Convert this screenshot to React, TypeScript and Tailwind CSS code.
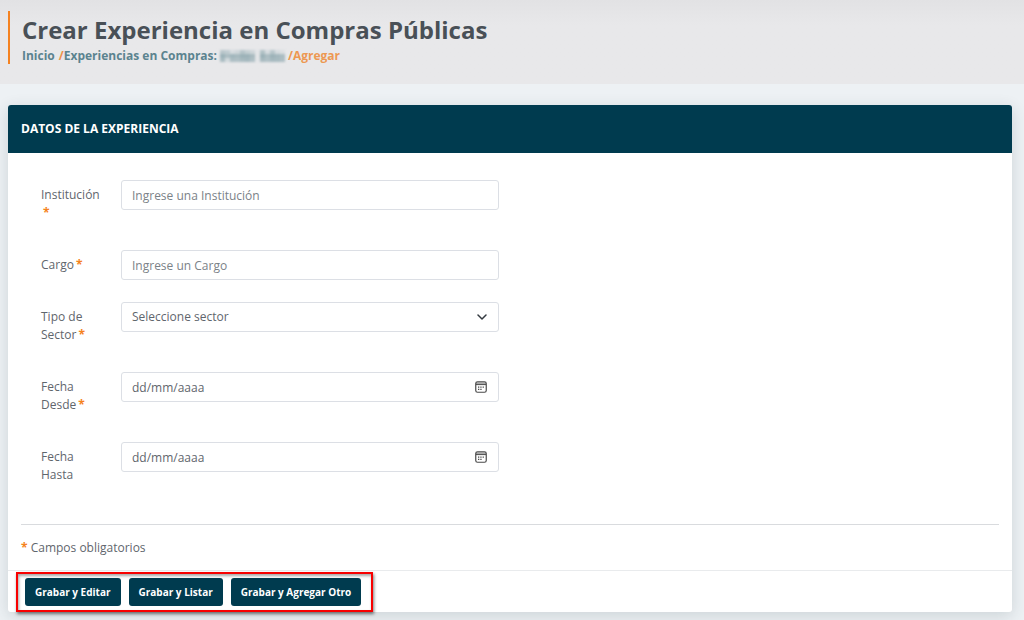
import { useState } from "react";
import type { ReactNode } from "react";

const fieldClass =
  "h-[30px] w-full rounded-[3px] border border-[#dcdfe5] bg-white px-2.5 text-[12px] text-[#5f666d] outline-none placeholder:opacity-100 focus:border-[#00394d]";

function Required() {
  return <span className="ml-[2px] font-bold text-[#f58220]">*</span>;
}

function Row({ id, label, required, children }: { id: string; label: string; required?: boolean; children: ReactNode }) {
  return (
    <div className="mb-[22px] flex items-start">
      <label htmlFor={id} className="w-20 shrink-0 py-[6px] pr-[18px] leading-[18px]">
        {label}
        {required && (
          <>
            <wbr />
            <Required />
          </>
        )}
      </label>
      <div className="relative min-w-0 flex-1">{children}</div>
    </div>
  );
}

function CalendarIcon() {
  return (
    <svg width="12" height="12" viewBox="0 0 12 12" fill="none">
      <path d="M1 1.2h10v2.3H1z" fill="#aaaaaa" />
      <rect x="0.75" y="0.75" width="10.5" height="10.5" rx="1.8" stroke="#4a4a4a" strokeWidth="1.2" />
      <path d="M1 3.6h10" stroke="#4a4a4a" strokeWidth="1" />
      <path d="M3 5.4h1.3v1.3H3zM5.3 5.4h1.3v1.3H5.3zM7.6 5.4h1.3v1.3H7.6zM3 7.7h1.3V9H3zM5.3 7.7h1.3V9H5.3z" fill="#4a4a4a" />
    </svg>
  );
}

function DateField({ id }: { id: string }) {
  const [value, setValue] = useState("");
  return (
    <>
      <input
        id={id}
        type="text"
        inputMode="numeric"
        placeholder="dd/mm/aaaa"
        value={value}
        onChange={(e) => setValue(e.target.value)}
        className={`${fieldClass} pr-9 placeholder:text-[#5f666d]`}
      />
      <button type="button" aria-label="Calendario" className="absolute inset-y-0 right-3 flex items-center">
        <CalendarIcon />
      </button>
    </>
  );
}

/* Mosaic tones that hide the person's name, one row of cells per line. */
const mosaic = [
  ["#b9c7cb", "#c0ccd0", "#d6dcdf", "#ced6d9", "#b6c5c9", "#c4cfd2", "#ced6d9", "#e3e5e7", "#b2c2c6", "#d6dcdf", "#b9c7cb", "#d6dcdf", "#dce0e2"],
  ["#9db3b9", "#adbec3", "#a1b6bc", "#a7babf", "#9cb2b8", "#9db3b9", "#a9bbc0", "#e3e5e7", "#9cb2b8", "#adbec3", "#9db3b9", "#a5b8be", "#abbdc2"],
  ["#abbdc2", "#d1d9dc", "#adbec3", "#b0c0c5", "#a8bbc0", "#a5b8be", "#b0c0c5", "#e3e5e7", "#a9bbc0", "#b0c0c5", "#a6b9bf", "#a8bbc0", "#adbec3"],
];

function HiddenName() {
  return (
    <svg width="65" height="12" viewBox="0 0 65 12" className="mr-[3px] ml-[3px] inline-block shrink-0 blur-[1px]" aria-hidden="true">
      {mosaic.map((row, y) => row.map((c, x) => <rect key={`${x}-${y}`} x={x * 5} y={y * 4} width="5" height="4" fill={c} />))}
    </svg>
  );
}

const actions = ["Grabar y Editar", "Grabar y Listar", "Grabar y Agregar Otro"];

export default function App() {
  return (
    <div className="min-h-screen bg-[#edf1f4] font-['Open_Sans','Noto_Sans',sans-serif] text-[12px] text-[#5f666d]">
      <header className="bg-linear-to-b from-[#e2e2e4] to-[#e8e8ea] to-30% px-2 pt-[11px] pb-5">
        <div className="border-l-2 border-[#f58220] pt-[3px] pl-3">
          <h1 className="text-[24px] leading-[32px] font-bold text-[#495057]">Crear Experiencia en Compras Públicas</h1>
          <nav className="mt-[2px] flex items-center text-[12px] leading-4 font-bold text-[#5b838f]">
            <a href="#inicio">Inicio</a>
            <span className="ml-1 text-[#f0924a]">/</span>
            <a href="#experiencias">Experiencias en Compras:</a>
            <HiddenName />
            <span className="text-[#ed9852]">/Agregar</span>
          </nav>
        </div>
      </header>

      <main className="pt-[21px] pr-3 pb-2 pl-2">
        <form
          onSubmit={(e) => e.preventDefault()}
          className="rounded-[3px] bg-white shadow-[0_4px_16px_rgba(40,60,70,0.16)]"
        >
          <h2 className="rounded-t-[3px] bg-[#003b4f] px-[13px] text-[12px] leading-[48px] font-bold text-white">
            DATOS DE LA EXPERIENCIA
          </h2>

          <div className="px-[13px] pt-[27px]">
            <div className="grid gap-[22px] border-b border-[#d9dbde] px-5 pb-3 md:grid-cols-2">
              <div>
                <Row id="institucion" label="Institución" required>
                  <input
                    id="institucion"
                    type="text"
                    placeholder="Ingrese una Institución"
                    className={`${fieldClass} placeholder:text-[#7b8288]`}
                  />
                </Row>
                <Row id="cargo" label="Cargo" required>
                  <input
                    id="cargo"
                    type="text"
                    placeholder="Ingrese un Cargo"
                    className={`${fieldClass} placeholder:text-[#7b8288]`}
                  />
                </Row>
                <Row id="sector" label="Tipo de Sector" required>
                  <select id="sector" className={`${fieldClass} appearance-none pr-9`}>
                    <option>Seleccione sector</option>
                    <option>Público</option>
                    <option>Privado</option>
                  </select>
                  <svg
                    width="10"
                    height="6"
                    viewBox="0 0 10 6"
                    fill="none"
                    className="pointer-events-none absolute top-3 right-3"
                  >
                    <path d="M1 1l4 4 4-4" stroke="#343a40" strokeWidth="1.5" strokeLinecap="round" strokeLinejoin="round" />
                  </svg>
                </Row>
                <Row id="desde" label="Fecha Desde" required>
                  <DateField id="desde" />
                </Row>
                <Row id="hasta" label="Fecha Hasta">
                  <DateField id="hasta" />
                </Row>
              </div>
            </div>
            <p className="pt-[14px] pb-[13px] leading-[18px]">
              <span className="font-bold text-[#f58220]">*</span> Campos obligatorios
            </p>
          </div>

          <footer className="flex border-t border-[#e9ebed] px-2 pt-[1px]">
            <div className="flex flex-wrap gap-2 border-2 border-[#f80000] py-1 pr-[10px] pl-[7px] shadow-[1px_2px_3px_rgba(0,0,0,0.5),inset_1px_2px_3px_rgba(0,0,0,0.35)]">
              {actions.map((label) => (
                <button
                  key={label}
                  type="submit"
                  className="h-7 rounded-[3px] bg-[#003b4f] px-[10px] text-[10px] font-bold text-white"
                >
                  {label}
                </button>
              ))}
            </div>
          </footer>
        </form>
      </main>
    </div>
  );
}
